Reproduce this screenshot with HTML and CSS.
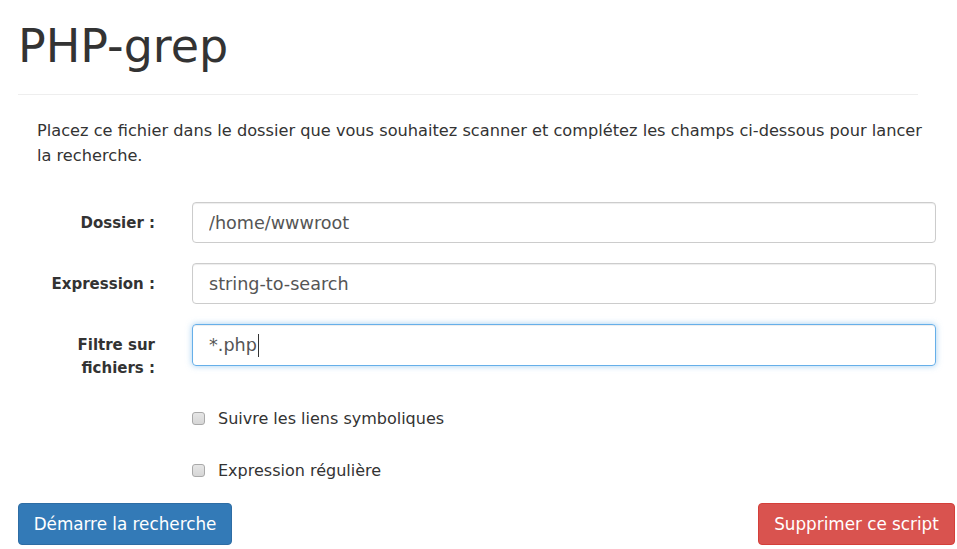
FILE: index.html
```html
<!DOCTYPE html>
<html lang="fr">
<head>
<meta charset="utf-8">
<title>PHP-grep</title>
<link rel="stylesheet" href="styles.css">
</head>
<body>
<div class="page">
  <h1 class="title">PHP-grep</h1>
  <hr class="rule">
  <p class="intro">Placez ce fichier dans le dossier que vous souhaitez scanner et complétez les champs ci-dessous pour lancer la recherche.</p>
  <form class="form">
    <div class="row">
      <label class="label" for="dir">Dossier :</label>
      <input class="field" id="dir" type="text" value="/home/wwwroot">
    </div>
    <div class="row">
      <label class="label" for="expr">Expression :</label>
      <input class="field" id="expr" type="text" value="string-to-search">
    </div>
    <div class="row last">
      <label class="label" for="filter">Filtre sur fichiers :</label>
      <div class="field focus"><span>*.php</span><span class="caret"></span></div>
    </div>
    <div class="check-row first">
      <span class="box"></span><span class="check-text">Suivre les liens symboliques</span>
    </div>
    <div class="check-row">
      <span class="box"></span><span class="check-text">Expression régulière</span>
    </div>
    <div class="actions">
      <button type="button" class="btn primary">Démarre la recherche</button>
      <button type="button" class="btn danger">Supprimer ce script</button>
    </div>
  </form>
</div>
</body>
</html>
```
FILE: styles.css
```css
* { box-sizing: border-box; }
html, body { margin: 0; padding: 0; background: #fff; }
body {
  font-family: "DejaVu Sans", "Open Sans", sans-serif;
  color: #333;
  font-size: 16px;
}
.page {
  padding: 0 2px 0 18px;
  width: 957px;
}
.title {
  font-weight: 400;
  font-size: 46px;
  line-height: 56px;
  margin: 18px 0 0 0;
}
.rule {
  border: 0;
  border-top: 1px solid #eee;
  width: 900px;
  margin: 20px 0 0 0;
}
.intro {
  margin: 23px 0 0 19px;
  width: 895px;
  font-size: 16.2px;
  line-height: 25px;
}
.form { margin-top: 34px; }
.row {
  display: flex;
  align-items: flex-start;
  margin-bottom: 20px;
}
.row.last { margin-bottom: 0; }
.label {
  width: 137px;
  text-align: right;
  font-weight: 700;
  font-size: 15px;
  padding-top: 10px;
  line-height: 23px;
  padding-left: 24px;
}
.field {
  margin-left: 37px;
  width: 744px;
  height: 41px;
  border: 1px solid #ccc;
  border-radius: 4px;
  padding: 0 16px;
  font-family: inherit;
  font-size: 17.6px;
  color: #555;
  box-shadow: inset 0 1px 1px rgba(0,0,0,.075);
  outline: none;
}
.field.focus {
  display: flex;
  align-items: center;
  height: 42px;
  border-color: #66afe9;
  box-shadow: inset 0 1px 1px rgba(0,0,0,.075), 0 0 6px rgba(102,175,233,.6);
}
.caret {
  display: inline-block;
  width: 1px;
  height: 23px;
  background: #333;
  margin-left: 1px;
}
.check-row {
  display: flex;
  align-items: center;
  margin-left: 174px;
  margin-top: 28px;
  height: 24px;
}
.check-row.first { margin-top: 26px; }
.box {
  width: 13px;
  height: 13px;
  border: 1px solid #a9a9a9;
  border-radius: 3px;
  background: linear-gradient(#e6e6e6, #d6d6d6);
}
.check-text {
  margin-left: 13px;
  font-size: 16px;
}
.actions {
  display: flex;
  justify-content: space-between;
  margin-top: 21px;
}
.btn {
  font-family: inherit;
  font-size: 16.8px;
  height: 42px;
  padding: 0 12px;
  border-radius: 4px;
  color: #fff;
  border: 1px solid transparent;
}
.primary { background: #337ab7; border-color: #2e6da4; width: 214px; }
.danger { background: #d9534f; border-color: #d43f3a; width: 197px; }
```
